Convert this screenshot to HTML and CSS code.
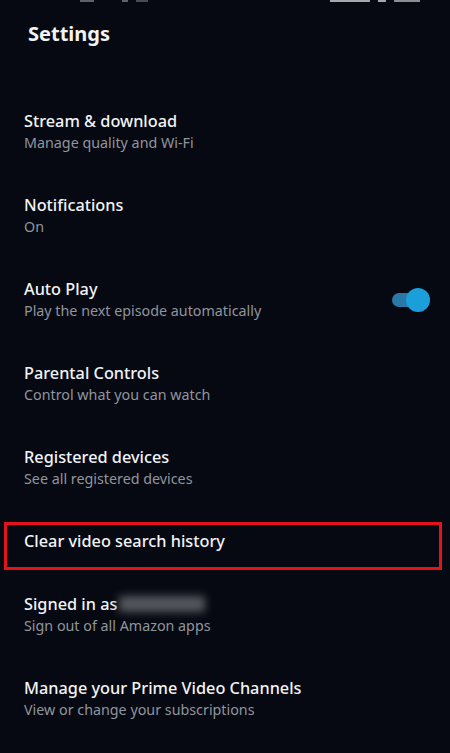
FILE: index.html
```html
<!DOCTYPE html>
<html>
<head>
  <title>Settings</title>
  <link rel="stylesheet" href="styles.css">
</head>
<body>
  <div class="status-bar">
    <span class="bit b1"></span><span class="bit b2"></span><span class="bit b3"></span>
    <span class="spacer"></span>
    <span class="bit b4"></span><span class="bit b5"></span><span class="bit b6"></span>
  </div>
  <header class="top-bar">
    <h1 class="page-title">Settings</h1>
  </header>
  <ul class="settings-list">
    <li class="setting">
      <div class="setting-text">
        <div class="setting-name">Stream &amp; download</div>
        <div class="setting-sub">Manage quality and Wi-Fi</div>
      </div>
    </li>
    <li class="setting">
      <div class="setting-text">
        <div class="setting-name">Notifications</div>
        <div class="setting-sub">On</div>
      </div>
    </li>
    <li class="setting">
      <div class="setting-text">
        <div class="setting-name">Auto Play</div>
        <div class="setting-sub">Play the next episode automatically</div>
      </div>
      <div class="toggle on">
        <span class="toggle-track"></span>
        <span class="toggle-knob"></span>
      </div>
    </li>
    <li class="setting">
      <div class="setting-text">
        <div class="setting-name">Parental Controls</div>
        <div class="setting-sub">Control what you can watch</div>
      </div>
    </li>
    <li class="setting">
      <div class="setting-text">
        <div class="setting-name">Registered devices</div>
        <div class="setting-sub">See all registered devices</div>
      </div>
    </li>
    <li class="setting marked">
      <div class="setting-text">
        <div class="setting-name">Clear video search history</div>
      </div>
    </li>
    <li class="setting">
      <div class="setting-text">
        <div class="setting-name">Signed in as<span class="hidden-name"></span></div>
        <div class="setting-sub">Sign out of all Amazon apps</div>
      </div>
    </li>
    <li class="setting">
      <div class="setting-text">
        <div class="setting-name">Manage your Prime Video Channels</div>
        <div class="setting-sub">View or change your subscriptions</div>
      </div>
    </li>
  </ul>
</body>
</html>
```

FILE: styles.css
```css
html, body {
  margin: 0;
  padding: 0;
}
body {
  background-color: #060912;
  color: #f2f3f5;
  font-family: "Noto Sans", "Open Sans", sans-serif;
  height: 753px;
  overflow: hidden;
}

/* phone status bar, cut off at the top edge */
.status-bar {
  height: 4px;
  display: flex;
  align-items: flex-start;
  gap: 8px;
  padding: 0 30px 0 80px;
  overflow: hidden;
}
.status-bar .bit {
  height: 2px;
  background-color: #5e6066;
}
.status-bar .b1 { width: 14px; }
.status-bar .b2 { width: 6px; margin-left: 20px; }
.status-bar .b3 { width: 12px; background-color: #4a4c51; }
.status-bar .b4 { width: 40px; background-color: #a6a7ab; }
.status-bar .b5 { width: 8px; background-color: #a6a7ab; }
.status-bar .b6 { width: 26px; background-color: #8c8d91; }
.status-bar .spacer {
  flex: 1;
}

.top-bar {
  height: 86px;
  padding-left: 28px;
}
.page-title {
  margin: 0;
  padding-top: 17px;
  font-size: 20px;
  font-weight: 700;
  line-height: 26px;
}

.settings-list {
  list-style: none;
  margin: 0;
  padding: 0;
}
.setting {
  display: flex;
  align-items: center;
  padding: 21px 20px 21px 24px;
}
.setting.marked {
  position: relative;
}
.setting.marked::after {
  content: "";
  position: absolute;
  left: 4px;
  right: 8px;
  top: 12px;
  bottom: 3px;
  border: 3px solid #e3131b;
}
.setting-text {
  flex: 1;
}
.setting-name {
  font-size: 16.3px;
  font-weight: 500;
  line-height: 21px;
}
.setting-sub {
  font-size: 14.3px;
  line-height: 21px;
  color: #91959d;
}
.hidden-name {
  display: inline-block;
  width: 86px;
  height: 16px;
  margin-left: 2px;
  vertical-align: -2px;
  background-color: #55585e;
  filter: blur(4px);
}

/* on/off switch */
.toggle {
  position: relative;
  width: 38px;
  height: 24px;
}
.toggle-track {
  position: absolute;
  left: 0;
  top: 5px;
  width: 30px;
  height: 14px;
  border-radius: 7px;
  background-color: #2a78a8;
}
.toggle-knob {
  position: absolute;
  right: 0;
  top: 0;
  width: 24px;
  height: 24px;
  border-radius: 50%;
  background-color: #1a9fdb;
}
```
